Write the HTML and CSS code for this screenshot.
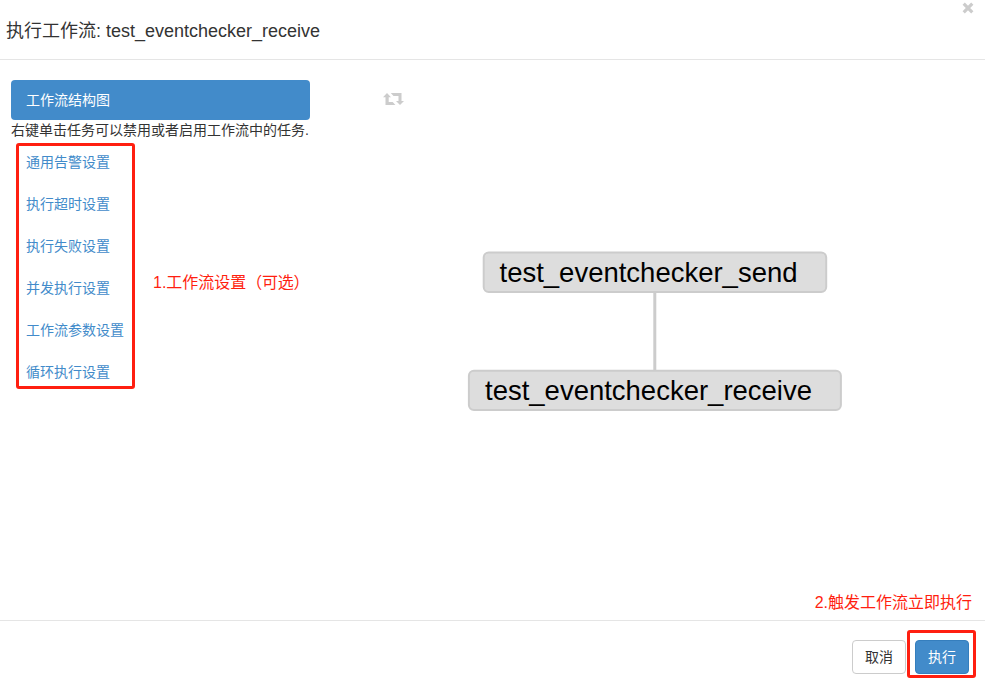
FILE: index.html
```html
<!DOCTYPE html>
<html lang="zh-CN">
<head>
<meta charset="utf-8">
<title>执行工作流</title>
<link rel="stylesheet" href="styles.css">
</head>
<body>
<div class="modal">
  <header class="modal-header">
    <h4 class="modal-title">执行工作流: test_eventchecker_receive</h4>
    <button class="close" aria-label="关闭"><svg width="12" height="12" viewBox="0 0 12 12"><path d="M1.700 1.700L10.300 10.300M10.300 1.700L1.700 10.300" stroke="#ccc" stroke-width="3.200"/></svg></button>
  </header>
  <main class="modal-body">
    <nav class="side">
      <a class="tab">工作流结构图</a>
      <p class="hint">右键单击任务可以禁用或者启用工作流中的任务.</p>
      <div class="options">
        <ul class="menu">
          <li>通用告警设置</li>
          <li>执行超时设置</li>
          <li>执行失败设置</li>
          <li>并发执行设置</li>
          <li>工作流参数设置</li>
          <li>循环执行设置</li>
        </ul>
        <span class="note">1.工作流设置<span class="paren">（可选）</span></span>
      </div>
    </nav>
    <section class="canvas">
      <svg class="graph" width="645" height="560" viewBox="340 60 645 560">
        <g fill="#ccc">
          <path d="M387 93L391 97.300H388.700V102H392.700L395.400 105H385.500V97.300H383Z"/>
          <path d="M390.800 93H401.500V101H404L400 105L396 101H398.500V96H393.500Z"/>
        </g>
        <path d="M654.800 292V371" stroke="#ccc" stroke-width="3"/>
        <g fill="#ddd" stroke="#ccc" stroke-width="2">
          <rect x="483.700" y="252.600" width="342.500" height="39.400" rx="5"/>
          <rect x="468.900" y="370.800" width="372" height="39.200" rx="5"/>
        </g>
        <g class="label">
          <text x="499.500" y="282" textLength="298" lengthAdjust="spacingAndGlyphs">test_eventchecker_send</text>
          <text x="485" y="400" textLength="327" lengthAdjust="spacingAndGlyphs">test_eventchecker_receive</text>
        </g>
      </svg>
      <span class="note run-note">2.触发工作流立即执行</span>
    </section>
  </main>
  <footer class="modal-footer">
    <button class="btn">取消</button>
    <span class="mark"><button class="btn primary">执行</button></span>
  </footer>
</div>
</body>
</html>
```
FILE: styles.css
```css
* { box-sizing: border-box; }
body {
  margin: 0;
  background: #fff;
  color: #333;
  font: 14px/20px "Liberation Sans", "Noto Sans CJK SC", sans-serif;
}
.modal {
  display: grid;
  grid-template-rows: 60px 560px 74px;
  height: 694px;
  overflow: hidden;
}
.modal-header {
  display: flex;
  justify-content: space-between;
  border-bottom: 1px solid #e5e5e5;
  padding: 0 11px 0 6px;
}
.modal-title {
  margin: 18px 0 0;
  font-size: 18px;
  line-height: 26px;
  font-weight: 400;
  white-space: nowrap;
}
.close {
  align-self: flex-start;
  margin-top: 2px;
  padding: 0;
  border: 0;
  background: none;
  line-height: 0;
}
.modal-body {
  display: grid;
  grid-template-columns: 340px 645px;
}
.side { padding: 20px 0 0 11px; }
.tab {
  display: block;
  width: 299px;
  height: 40px;
  padding: 0 15px;
  border-radius: 4px;
  background: #428bca;
  color: #fff;
  line-height: 40px;
}
.hint {
  margin: 0;
  height: 23px;
  white-space: nowrap;
}
.options {
  display: flex;
  align-items: center;
  gap: 18px;
  margin-left: 5px;
  height: 246px;
}
.menu {
  display: grid;
  grid-template-rows: repeat(6, 42px);
  width: 119px;
  height: 246px;
  margin: 0;
  padding: 0 0 0 7px;
  border: 3px solid #ff1f10;
  border-radius: 3px;
  list-style: none;
  line-height: 32px;
  color: #428bca;
  white-space: nowrap;
}
.note {
  color: #ff1f10;
  font-size: 16px;
  line-height: 24px;
  white-space: nowrap;
}
.options .note { padding-top: 34px; }
.paren { letter-spacing: -0.3px; }
.canvas { position: relative; }
.graph { display: block; }
.label {
  fill: #000;
  font-family: "Liberation Sans", sans-serif;
  font-size: 28px;
}
.run-note {
  position: absolute;
  right: 13px;
  bottom: 5px;
}
.modal-footer {
  display: flex;
  justify-content: flex-end;
  align-items: flex-start;
  gap: 1px;
  padding: 9px 9px 0 0;
  border-top: 1px solid #e5e5e5;
}
.btn {
  width: 54px;
  height: 34px;
  margin-top: 10px;
  padding: 0;
  border: 1px solid #ccc;
  border-radius: 4px;
  background: #fff;
  color: #333;
  font: inherit;
}
.mark {
  width: 69px;
  height: 48px;
  padding: 7px 5px;
  border: 3px solid #ff1f10;
  border-radius: 3px;
  line-height: 0;
}
.primary {
  margin: 0;
  border-color: #357ebd;
  background: #428bca;
  color: #fff;
  line-height: 20px;
}
```
